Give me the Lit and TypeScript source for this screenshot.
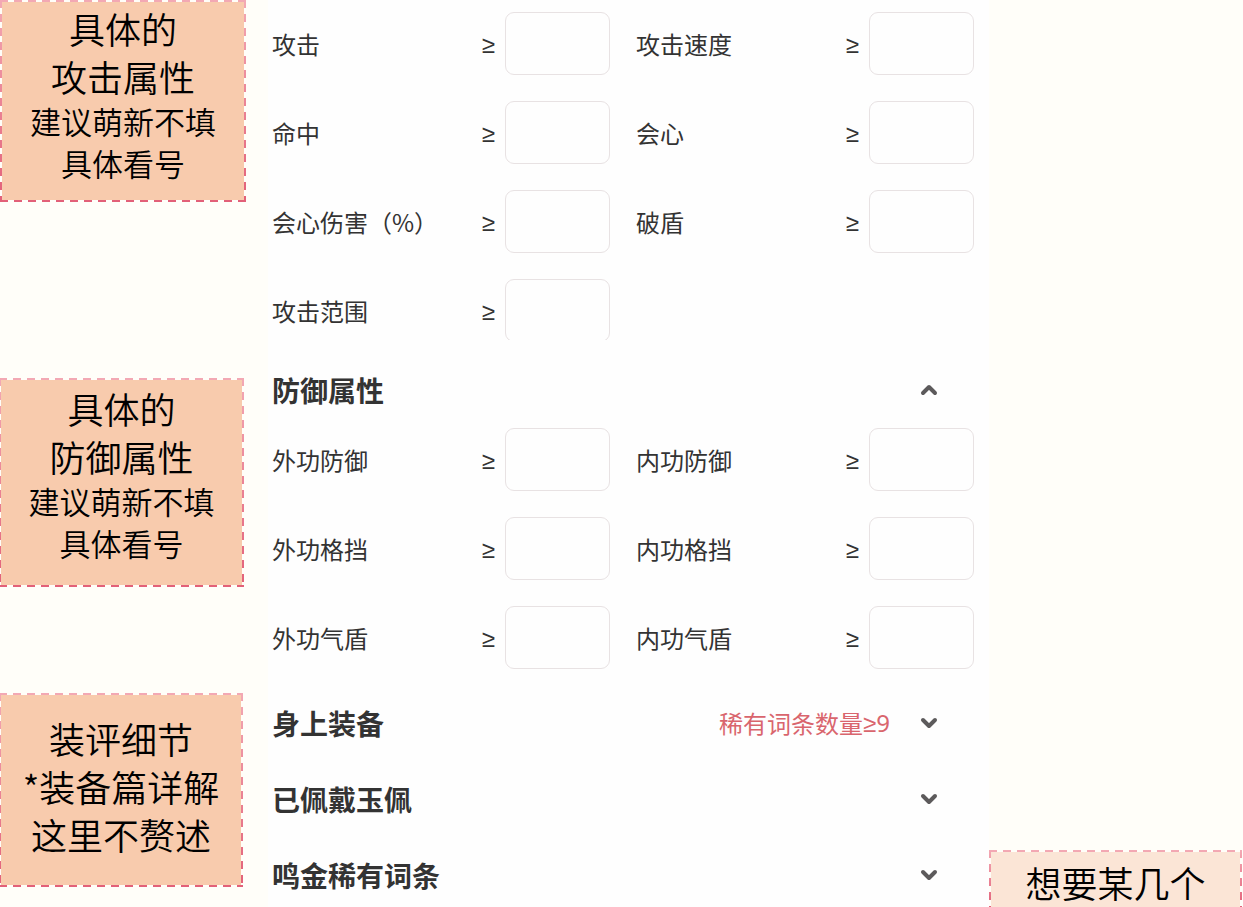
import { LitElement, html, css, svg } from "lit";
import { customElement, property, state } from "lit/decorators.js";

interface Field {
  id: string;
  label: string;
}

const ATTACK: Field[] = [
  { id: "attack", label: "攻击" },
  { id: "attack-speed", label: "攻击速度" },
  { id: "hit", label: "命中" },
  { id: "crit", label: "会心" },
  { id: "crit-damage", label: "会心伤害（%）" },
  { id: "shield-break", label: "破盾" },
  { id: "attack-range", label: "攻击范围" },
];

const DEFENSE: Field[] = [
  { id: "outer-defense", label: "外功防御" },
  { id: "inner-defense", label: "内功防御" },
  { id: "outer-block", label: "外功格挡" },
  { id: "inner-block", label: "内功格挡" },
  { id: "outer-shield", label: "外功气盾" },
  { id: "inner-shield", label: "内功气盾" },
];

/** Handwritten-style remark in a dashed frame. */
@customElement("side-note")
class SideNote extends LitElement {
  static styles = css`
    :host {
      display: block;
      position: relative;
      box-sizing: border-box;
      border: 2px solid transparent;
      background: var(--note-fill, #f8cbad) padding-box;
      color: #000;
      text-align: center;
      font-family: "KaiTi", "STKaiti", "Noto Sans CJK SC", sans-serif;
      font-weight: 350;
    }
    .frame {
      position: absolute;
      inset: -2px;
      pointer-events: none;
      background: linear-gradient(#f3a9b4, #e26078);
      --across: repeating-linear-gradient(90deg, #000 0 8px, transparent 8px 14px);
      --down: repeating-linear-gradient(#000 0 8px, transparent 8px 14px);
      mask:
        var(--across) top / 100% 2px no-repeat,
        var(--across) bottom / 100% 2px no-repeat,
        var(--down) left / 2px 100% no-repeat,
        var(--down) right / 2px 100% no-repeat;
    }
  `;

  render() {
    return html`<div class="frame"></div><slot></slot>`;
  }
}

/** Labelled "at least" number box. */
@customElement("min-field")
class MinField extends LitElement {
  @property() name = "";
  @property() label = "";

  static styles = css`
    :host {
      display: flex;
      align-items: center;
      color: #333;
      font-size: 24px;
      line-height: 35px;
    }
    .label {
      flex: 1;
      white-space: nowrap;
    }
    .sign {
      margin-right: 10px;
      font-family: "Noto Sans", sans-serif;
      font-weight: 500;
    }
    .box {
      box-sizing: border-box;
      width: 105px;
      height: 63px;
      padding: 0 12px;
      border: 1px solid #e8e2e3;
      border-radius: 9px;
      background: #fefefe;
      color: inherit;
      font: inherit;
    }
  `;

  render() {
    return html`
      <label class="label" for=${this.name}>${this.label}</label>
      <span class="sign" aria-hidden="true">≥</span>
      <input class="box" id=${this.name} type="text" inputmode="numeric" />
    `;
  }
}

/** Bold section heading that opens and closes its section. */
@customElement("section-toggle")
class SectionToggle extends LitElement {
  @property() heading = "";
  @property() summary = "";
  @property() limit = "";
  @property({ type: Boolean }) open = false;

  static styles = css`
    :host {
      display: block;
    }
    .toggle {
      display: flex;
      align-items: center;
      width: 100%;
      height: 52px;
      padding: 0 36px 0 0;
      border: 0;
      background: none;
      color: #333;
      font: inherit;
      text-align: left;
      cursor: pointer;
    }
    .heading {
      flex: 1;
      font-size: 28px;
      font-weight: 700;
      line-height: 40px;
    }
    .summary {
      display: flex;
      margin-right: 30px;
      color: #d9656d;
      font-size: 24px;
      line-height: 36px;
    }
    .limit {
      font-family: "Noto Sans", sans-serif;
    }
    .chevron {
      width: 18px;
      height: 18px;
      fill: none;
      stroke: #5c5a5b;
      stroke-width: 4;
      stroke-linecap: round;
      stroke-linejoin: round;
    }
  `;

  render() {
    const path = this.open ? svg`<path d="M3 12L9 6L15 12" />` : svg`<path d="M3 6L9 12L15 6" />`;
    return html`
      <button class="toggle" type="button" aria-expanded=${this.open ? "true" : "false"}>
        <span class="heading">${this.heading}</span>
        ${this.summary
          ? html`<span class="summary">${this.summary}<span class="limit">${this.limit}</span></span>`
          : null}
        <svg class="chevron" viewBox="0 0 18 18" aria-hidden="true">${path}</svg>
      </button>
    `;
  }
}

@customElement("app-root")
class AppRoot extends LitElement {
  @state() private defenseOpen = true;

  static styles = css`
    :host {
      display: grid;
      grid-template-columns: 246px minmax(0, 1fr) 254px;
      min-height: 100vh;
      background: #fffef9;
      font-family: "Noto Sans CJK SC", sans-serif;
    }
    .notes {
      display: flex;
      flex-direction: column;
    }
    .big,
    .small {
      margin: 0;
      white-space: nowrap;
    }
    .big {
      font-size: 36px;
      line-height: 48px;
    }
    .small {
      font-size: 31px;
      line-height: 42px;
    }
    .note-attack {
      padding: 2px 0 16px;
    }
    .note-defense {
      margin: 176px 2px 0 -1px;
      padding: 4px 0 21px;
    }
    .note-gear {
      margin: 106px 3px 0 -1px;
      padding: 19px 0 27px;
    }
    .note-wish {
      --note-fill: #fbe5d6;
      align-self: end;
      margin-right: 1px;
      padding: 6px 0 1px;
      border-bottom: 0;
    }
    .panel {
      margin-left: 22px;
      padding: 0 15px 0 4px;
      background: #fefefe;
    }
    .fields {
      display: grid;
      grid-template-columns: repeat(2, minmax(0, 1fr));
      gap: 26px;
    }
    .attack {
      box-sizing: border-box;
      max-height: 340px;
      margin-bottom: 24px;
      padding-top: 12px;
      overflow: hidden;
    }
    .defense {
      padding-top: 12px;
    }
    .closed {
      display: grid;
      gap: 24px;
      margin-top: 28px;
      padding-bottom: 4px;
    }
  `;

  private fields(list: Field[]) {
    return list.map((f) => html`<min-field .name=${f.id} .label=${f.label}></min-field>`);
  }

  render() {
    return html`
      <aside class="notes">
        <side-note class="note-attack">
          <p class="big">具体的</p>
          <p class="big">攻击属性</p>
          <p class="small">建议萌新不填</p>
          <p class="small">具体看号</p>
        </side-note>
        <side-note class="note-defense">
          <p class="big">具体的</p>
          <p class="big">防御属性</p>
          <p class="small">建议萌新不填</p>
          <p class="small">具体看号</p>
        </side-note>
        <side-note class="note-gear">
          <p class="big">装评细节</p>
          <p class="big">*装备篇详解</p>
          <p class="big">这里不赘述</p>
        </side-note>
      </aside>
      <main class="panel">
        <section class="fields attack">${this.fields(ATTACK)}</section>
        <section-toggle
          heading="防御属性"
          ?open=${this.defenseOpen}
          @click=${() => (this.defenseOpen = !this.defenseOpen)}
        ></section-toggle>
        ${this.defenseOpen ? html`<section class="fields defense">${this.fields(DEFENSE)}</section>` : null}
        <div class="closed">
          <section-toggle heading="身上装备" summary="稀有词条数量" limit="≥9"></section-toggle>
          <section-toggle heading="已佩戴玉佩"></section-toggle>
          <section-toggle heading="鸣金稀有词条"></section-toggle>
        </div>
      </main>
      <side-note class="note-wish">
        <p class="big">想要某几个</p>
      </side-note>
    `;
  }
}
